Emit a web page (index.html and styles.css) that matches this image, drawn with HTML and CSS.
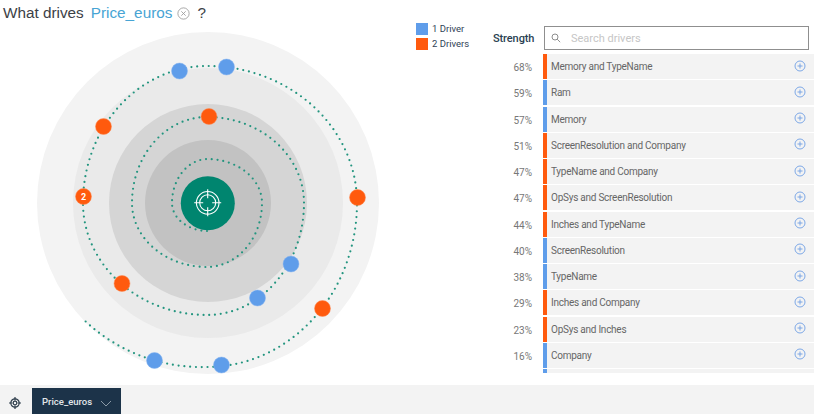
FILE: index.html
```html
<!DOCTYPE html>
<html lang="en">
<head>
<meta charset="utf-8">
<title>What drives Price_euros</title>
<link rel="stylesheet" href="styles.css">
</head>
<body>
<div class="app">
  <div class="top">
    <section class="chart-col">
      <h1 class="title">
        <span>What drives</span>
        <span class="target">Price_euros</span>
        <svg class="clear" viewBox="0 0 12 12"><circle cx="6" cy="6" r="5.2"/><path d="M4 4l4 4M8 4l-4 4"/></svg>
        <span class="q">?</span>
      </h1>
      <svg class="spiral" viewBox="0 25 410 360">
        <circle class="r1" cx="208" cy="203" r="171"/>
        <circle class="r2" cx="208" cy="203" r="135"/>
        <circle class="r3" cx="208" cy="203" r="99"/>
        <circle class="r4" cx="208" cy="203" r="63"/>
        <path class="orbit" d="M207 231A36 28 0 0 1 172 203A36 44 0 0 1 207 159A55 44 0 0 1 262 203A55 64 0 0 1 207 267A75 64 0 0 1 132 203A75 86 0 0 1 207 117A97 86 0 0 1 304 203A97 112 0 0 1 207 315A124 112 0 0 1 83 203A124 137 0 0 1 207 66A150 137 0 0 1 357 203A150 164 0 0 1 207 367A170 170 0 0 1 82 318"/>
        <circle class="core" cx="207.800" cy="203.200" r="27"/>
        <g class="target-icon">
          <circle cx="207.700" cy="202.800" r="11.300"/>
          <circle cx="207.700" cy="202.800" r="8"/>
          <path d="M207.700 189.300v9M207.700 207.300v9M194.200 202.800h9M212.200 202.800h9"/>
        </g>
        <circle class="blue" cx="179.500" cy="71" r="8"/>
        <circle class="blue" cx="226.500" cy="67" r="8"/>
        <circle class="orange" cx="103.500" cy="126.500" r="8"/>
        <circle class="orange" cx="209" cy="116.500" r="8"/>
        <circle class="orange" cx="83.500" cy="196.500" r="8"/>
        <text class="node-label" x="83.500" y="199.800">2</text>
        <circle class="orange" cx="357.500" cy="197.500" r="8"/>
        <circle class="blue" cx="291" cy="264" r="8"/>
        <circle class="blue" cx="257.500" cy="298" r="8"/>
        <circle class="orange" cx="122" cy="283.500" r="8"/>
        <circle class="orange" cx="322.500" cy="308.500" r="8"/>
        <circle class="blue" cx="154.500" cy="360.500" r="8"/>
        <circle class="blue" cx="221.500" cy="365" r="8"/>
      </svg>
    </section>
    <aside class="legend">
      <div class="legend-item"><i class="swatch swatch-blue"></i>1 Driver</div>
      <div class="legend-item"><i class="swatch swatch-orange"></i>2 Drivers</div>
    </aside>
    <section class="drivers">
      <div class="drivers-head">
        <span class="strength">Strength</span>
        <div class="search">
          <svg class="search-icon" viewBox="0 0 12 12"><circle cx="4.800" cy="4.800" r="3.600"/><path d="M7.500 7.500l3.500 3.500"/></svg>
          <span class="placeholder">Search drivers</span>
        </div>
      </div>
      <ul class="rows">
        <li class="row"><span class="pct">68%</span><div class="bar two"><span>Memory and TypeName</span><svg class="plus" viewBox="0 0 12 12"><circle cx="6" cy="6" r="5"/><path d="M6 3.500v5M3.500 6h5"/></svg></div></li>
        <li class="row"><span class="pct">59%</span><div class="bar one"><span>Ram</span><svg class="plus" viewBox="0 0 12 12"><circle cx="6" cy="6" r="5"/><path d="M6 3.500v5M3.500 6h5"/></svg></div></li>
        <li class="row"><span class="pct">57%</span><div class="bar one"><span>Memory</span><svg class="plus" viewBox="0 0 12 12"><circle cx="6" cy="6" r="5"/><path d="M6 3.500v5M3.500 6h5"/></svg></div></li>
        <li class="row"><span class="pct">51%</span><div class="bar two"><span>ScreenResolution and Company</span><svg class="plus" viewBox="0 0 12 12"><circle cx="6" cy="6" r="5"/><path d="M6 3.500v5M3.500 6h5"/></svg></div></li>
        <li class="row"><span class="pct">47%</span><div class="bar two"><span>TypeName and Company</span><svg class="plus" viewBox="0 0 12 12"><circle cx="6" cy="6" r="5"/><path d="M6 3.500v5M3.500 6h5"/></svg></div></li>
        <li class="row"><span class="pct">47%</span><div class="bar two"><span>OpSys and ScreenResolution</span><svg class="plus" viewBox="0 0 12 12"><circle cx="6" cy="6" r="5"/><path d="M6 3.500v5M3.500 6h5"/></svg></div></li>
        <li class="row"><span class="pct">44%</span><div class="bar two"><span>Inches and TypeName</span><svg class="plus" viewBox="0 0 12 12"><circle cx="6" cy="6" r="5"/><path d="M6 3.500v5M3.500 6h5"/></svg></div></li>
        <li class="row"><span class="pct">40%</span><div class="bar one"><span>ScreenResolution</span><svg class="plus" viewBox="0 0 12 12"><circle cx="6" cy="6" r="5"/><path d="M6 3.500v5M3.500 6h5"/></svg></div></li>
        <li class="row"><span class="pct">38%</span><div class="bar one"><span>TypeName</span><svg class="plus" viewBox="0 0 12 12"><circle cx="6" cy="6" r="5"/><path d="M6 3.500v5M3.500 6h5"/></svg></div></li>
        <li class="row"><span class="pct">29%</span><div class="bar two"><span>Inches and Company</span><svg class="plus" viewBox="0 0 12 12"><circle cx="6" cy="6" r="5"/><path d="M6 3.500v5M3.500 6h5"/></svg></div></li>
        <li class="row"><span class="pct">23%</span><div class="bar two"><span>OpSys and Inches</span><svg class="plus" viewBox="0 0 12 12"><circle cx="6" cy="6" r="5"/><path d="M6 3.500v5M3.500 6h5"/></svg></div></li>
        <li class="row"><span class="pct">16%</span><div class="bar one"><span>Company</span><svg class="plus" viewBox="0 0 12 12"><circle cx="6" cy="6" r="5"/><path d="M6 3.500v5M3.500 6h5"/></svg></div></li>
        <li class="row"><span class="pct"></span><div class="bar one"></div></li>
      </ul>
    </section>
  </div>
  <footer class="bottom">
    <svg class="foot-icon" viewBox="0 0 14 14"><circle cx="7" cy="7" r="4.200"/><circle cx="7" cy="7" r="1.800"/><path d="M7 1v3.500M7 9.500V13M1 7h3.500M9.500 7H13"/></svg>
    <div class="tab"><span>Price_euros</span><svg class="chev" viewBox="0 0 12 7"><path d="M1 1l5 5 5-5"/></svg></div>
  </footer>
</div>
</body>
</html>
```
FILE: styles.css
```css
* { box-sizing: border-box; }
html, body { margin: 0; padding: 0; background: #fff; }
body { width: 814px; height: 414px; overflow: hidden; font-family: "Roboto", "Liberation Sans", sans-serif; }
.app { display: flex; flex-direction: column; height: 414px; }
.top { display: flex; height: 385px; }

.chart-col { width: 416px; flex: none; display: flex; flex-direction: column; }
.title { margin: 0; height: 25px; padding-left: 3px; display: flex; align-items: center; font: 400 15.300px/22px "Liberation Sans", sans-serif; color: #3c4146; }
.target { margin-left: 7px; color: #47a4d4; }
.clear { width: 13px; height: 13px; margin-left: 5px; margin-top: 2px; fill: none; stroke: #9b9b9b; stroke-width: .8; }
.q { margin-left: 7px; font-weight: 400; }
.spiral { width: 410px; height: 360px; display: block; }
.r1 { fill: #f3f3f3; }
.r2 { fill: #eaeaea; }
.r3 { fill: #d5d5d5; }
.r4 { fill: #c2c2c2; }
.core { fill: #00856f; }
.orbit { fill: none; stroke: #23957f; stroke-width: 2.200; stroke-linecap: round; stroke-dasharray: 0 5.800; }
.target-icon { fill: none; stroke: #fff; stroke-width: 1.100; }
.blue { fill: #5f9dea; stroke: #8ab6f0; stroke-width: .5; }
.orange { fill: #ff5a0e; stroke: #ff8a55; stroke-width: .5; }
.node-label { fill: #fff; font: 700 9px "Roboto", sans-serif; text-anchor: middle; }

.legend { width: 75px; flex: none; padding-top: 21px; }
.legend-item { display: flex; align-items: center; height: 15px; font-size: 9.500px; font-weight: 400; color: #2f4256; white-space: nowrap; }
.swatch { width: 12px; height: 12px; margin-right: 4px; }
.swatch-blue { background: #5f9dea; }
.swatch-orange { background: #ff5a0e; }

.drivers { flex: 1; min-width: 0; }
.drivers-head { display: flex; align-items: flex-start; padding-top: 26px; height: 54px; }
.strength { width: 53px; padding-left: 2px; margin-top: 6px; font-size: 11px; letter-spacing: -.1px; font-weight: 500; color: #2b3f52; }
.search { width: 265px; height: 24px; border: 1px solid #8f8f8f; display: flex; align-items: center; padding-left: 6px; background: #fff; }
.search-icon { width: 10px; height: 10px; fill: none; stroke: #777; stroke-width: 1; }
.placeholder { margin-left: 10px; font-size: 11px; color: #c6c6c6; }

.rows { list-style: none; margin: 0; padding: 0; height: 319px; overflow: hidden; }
.row { display: flex; height: 26.250px; }
.pct { width: 41px; text-align: right; padding-top: 8px; font-size: 10px; color: #777; flex: none; }
.bar { margin-left: 11px; flex: 1; height: 25px; border-left: 4px solid #5f9dea; background: #f3f3f3; display: flex; align-items: center; justify-content: space-between; padding: 0 8px 0 4px; font-size: 10px; letter-spacing: -.25px; color: #666; }
.one { border-left-color: #5f9dea; }
.two { border-left-color: #ff5a0e; }
.plus { width: 12px; height: 12px; margin-bottom: 2px; fill: none; stroke: #6f9fe4; stroke-width: .9; }

.bottom { height: 29px; background: #f3f3f3; display: flex; align-items: flex-end; }
.foot-icon { width: 14px; height: 14px; margin: 0 10px 4px 8px; fill: none; stroke: #2f3e4c; stroke-width: 1.200; }
.tab { width: 89px; height: 26px; background: #1c3349; color: #e3e6e9; display: flex; align-items: center; padding: 0 9px 0 10px; justify-content: space-between; font-size: 9.500px; font-weight: 500; }
.chev { width: 12px; height: 7px; margin-top: 4px; fill: none; stroke: #8a99a6; stroke-width: 1; }
```
